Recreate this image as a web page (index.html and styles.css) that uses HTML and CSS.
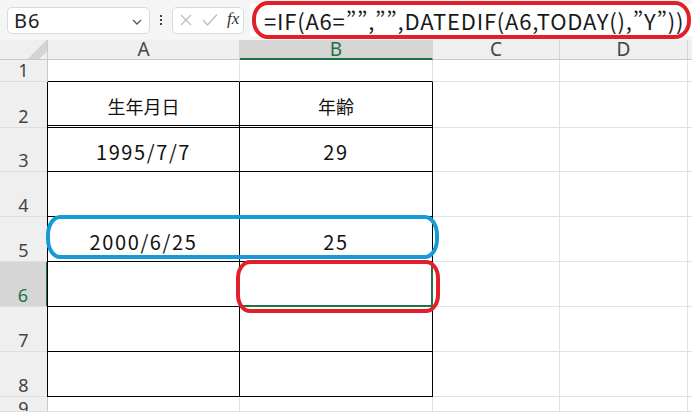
FILE: index.html
```html
<!DOCTYPE html>
<html lang="ja">
<head>
    <meta charset="UTF-8">
    <title>年齢計算</title>
    <link rel="stylesheet" href="styles.css">
</head>
<body>
    <div class="app">
        <!-- formula bar -->
        <div class="toolbar">
            <div class="name-box">
                <span class="name-text">B6</span>
                <svg class="chev" width="12" height="8" viewBox="0 0 12 8"><path d="M2 2 L6 6 L10 2" fill="none" stroke="#555" stroke-width="1.3"/></svg>
            </div>
            <div class="dots"><span></span><span></span><span></span></div>
            <div class="fx-box">
                <svg width="14" height="14" viewBox="0 0 14 14"><path d="M2 2 L12 12 M12 2 L2 12" stroke="#bdbdbd" stroke-width="1.3"/></svg>
                <svg width="16" height="14" viewBox="0 0 16 14"><path d="M1 7 L5.5 12 L15 1.5" fill="none" stroke="#bdbdbd" stroke-width="1.3"/></svg>
                <span class="fx">fx</span>
            </div>
            <div class="formula">=IF(A6=””,””,DATEDIF(A6,TODAY(),”Y”))</div>
            <div class="mark mark-formula"></div>
        </div>

        <!-- sheet -->
        <div class="sheet">
            <div class="corner"></div>
            <div class="col-head">A</div>
            <div class="col-head active">B</div>
            <div class="col-head">C</div>
            <div class="col-head">D</div>
            <div class="col-head last"></div>

            <div class="row-head">1</div>
            <div class="cell above"></div>
            <div class="cell above"></div>
            <div class="cell"></div>
            <div class="cell"></div>
            <div class="cell last"></div>

            <div class="row-head">2</div>
            <div class="cell tbl first dbl">生年月日</div>
            <div class="cell tbl dbl">年齢</div>
            <div class="cell"></div>
            <div class="cell"></div>
            <div class="cell last"></div>

            <div class="row-head">3</div>
            <div class="cell tbl first num">1995/7/7</div>
            <div class="cell tbl num">29</div>
            <div class="cell"></div>
            <div class="cell"></div>
            <div class="cell last"></div>

            <div class="row-head">4</div>
            <div class="cell tbl first"></div>
            <div class="cell tbl"></div>
            <div class="cell"></div>
            <div class="cell"></div>
            <div class="cell last"></div>

            <div class="row-head">5</div>
            <div class="cell tbl first num">2000/6/25</div>
            <div class="cell tbl num">25</div>
            <div class="cell"></div>
            <div class="cell"></div>
            <div class="cell last"></div>

            <div class="row-head active">6</div>
            <div class="cell tbl first"></div>
            <div class="cell tbl selected"></div>
            <div class="cell"></div>
            <div class="cell"></div>
            <div class="cell last"></div>

            <div class="row-head">7</div>
            <div class="cell tbl first"></div>
            <div class="cell tbl"></div>
            <div class="cell"></div>
            <div class="cell"></div>
            <div class="cell last"></div>

            <div class="row-head">8</div>
            <div class="cell tbl first"></div>
            <div class="cell tbl"></div>
            <div class="cell"></div>
            <div class="cell"></div>
            <div class="cell last"></div>

            <div class="row-head top">9</div>
            <div class="cell"></div>
            <div class="cell"></div>
            <div class="cell"></div>
            <div class="cell"></div>
            <div class="cell last"></div>

            <!-- hand-drawn marks -->
            <div class="mark mark-row"></div>
            <div class="mark mark-cell"></div>
        </div>
    </div>
</body>
</html>
```

FILE: styles.css
```css
body, html {
    margin: 0;
    padding: 0;
    background-color: #ffffff;
    overflow: hidden;
}
.app {
    width: 692px;
    height: 412px;
    font-family: "Noto Sans", "Noto Sans CJK JP", sans-serif;
    color: #1a1a1a;
}

/* formula bar */
.toolbar {
    position: relative;
    height: 40px;
    background-color: #f5f5f5;
    display: flex;
    align-items: center;
    padding: 0 0 0 7px;
    box-sizing: border-box;
}
.name-box {
    width: 143px;
    height: 27px;
    box-sizing: border-box;
    background: #fff;
    border: 1px solid #dadada;
    border-radius: 5px;
    display: flex;
    align-items: center;
    justify-content: space-between;
    padding: 0 6px 0 6px;
}
.name-text {
    font-size: 20px;
    color: #222;
    letter-spacing: 1px;
}
.chev {
    margin-top: 3px;
}
.dots {
    width: 22px;
    display: flex;
    flex-direction: column;
    align-items: center;
    gap: 2px;
}
.dots span {
    width: 2px;
    height: 2px;
    background: #444;
}
.fx-box {
    width: 72px;
    height: 27px;
    box-sizing: border-box;
    background: #fff;
    border: 1px solid #dadada;
    border-radius: 5px;
    display: flex;
    align-items: center;
    gap: 9px;
    padding: 0 0 0 6px;
}
.fx {
    font-family: "Liberation Serif", serif;
    font-style: italic;
    font-size: 17px;
    color: #333;
    margin-top: -2px;
}
.formula {
    flex: 1;
    height: 32px;
    margin-left: 6px;
    background: #fff;
    font-family: "Noto Sans CJK JP", sans-serif;
    font-size: 22px;
    line-height: 32px;
    padding-left: 14px;
    white-space: nowrap;
    color: #1a1a1a;
    letter-spacing: 0.8px;
}

/* sheet grid */
.sheet {
    position: relative;
    display: grid;
    grid-template-columns: 48px 192px 193px 127px 128px 4px;
    grid-template-rows: 20px 22px 46px 44px 45px 45px 45px 45px 45px 15px;
}
.corner {
    background: #efefef linear-gradient(135deg, transparent 70%, #d4d4d4 70%, #d4d4d4 88%, transparent 88%);
    border-right: 1px solid #c8c8c8;
    border-bottom: 1px solid #c8c8c8;
    box-sizing: border-box;
}
.col-head {
    background: #efefef;
    border-right: 1px solid #d6d6d6;
    border-bottom: 1px solid #c8c8c8;
    box-sizing: border-box;
    text-align: center;
    font-size: 19px;
    line-height: 19px;
    color: #444;
}
.col-head.active {
    background: #d6d6d6;
    color: #217346;
    border-bottom: 2px solid #217346;
}
.col-head.last {
    border-right: none;
}
.row-head {
    background: #efefef;
    border-right: 1px solid #c8c8c8;
    border-bottom: 1px solid #dedede;
    box-sizing: border-box;
    display: flex;
    align-items: flex-end;
    justify-content: center;
    font-size: 18px;
    line-height: 21px;
    color: #444;
}
.row-head.top {
    align-items: flex-start;
    line-height: 15px;
    padding-top: 4px;
    overflow: hidden;
}
.row-head.active {
    background: #d6d6d6;
    color: #217346;
    border-right: 2px solid #217346;
}
.cell {
    border-right: 1px solid #e1e1e1;
    border-bottom: 1px solid #e1e1e1;
    box-sizing: border-box;
    display: flex;
    align-items: center;
    justify-content: center;
    font-family: "Noto Sans CJK JP", sans-serif;
    font-size: 18px;
    padding-top: 4px;
    color: #111;
}
.cell.num {
    font-size: 20px;
    letter-spacing: 1.6px;
}
.cell.last {
    border-right: none;
}
.cell.above {
    border-bottom: 1px solid #000;
}
.cell.tbl {
    border-right: 1px solid #000;
    border-bottom: 1px solid #000;
}
.cell.tbl.first {
    box-shadow: -1px 0 0 #000;
}
.cell.tbl.dbl {
    border-bottom: 3px double #000;
}
.cell.tbl.selected {
    border-right: 2px solid #217346;
    border-bottom: 2px solid #217346;
}

/* annotations drawn over the screenshot */
.mark {
    position: absolute;
    box-sizing: border-box;
    border-style: solid;
    pointer-events: none;
}
.mark-formula {
    left: 252px;
    top: 1px;
    width: 439px;
    height: 38px;
    border-width: 4px;
    border-color: #e3202a;
    border-radius: 16px / 18px;
}
.mark-row {
    left: 46px;
    top: 175px;
    width: 393px;
    height: 44px;
    border-width: 4px;
    border-color: #159bd7;
    border-radius: 14px / 20px;
}
.mark-cell {
    left: 236px;
    top: 220px;
    width: 204px;
    height: 53px;
    border-width: 4px;
    border-color: #e3202a;
    border-radius: 14px / 18px;
}
```
